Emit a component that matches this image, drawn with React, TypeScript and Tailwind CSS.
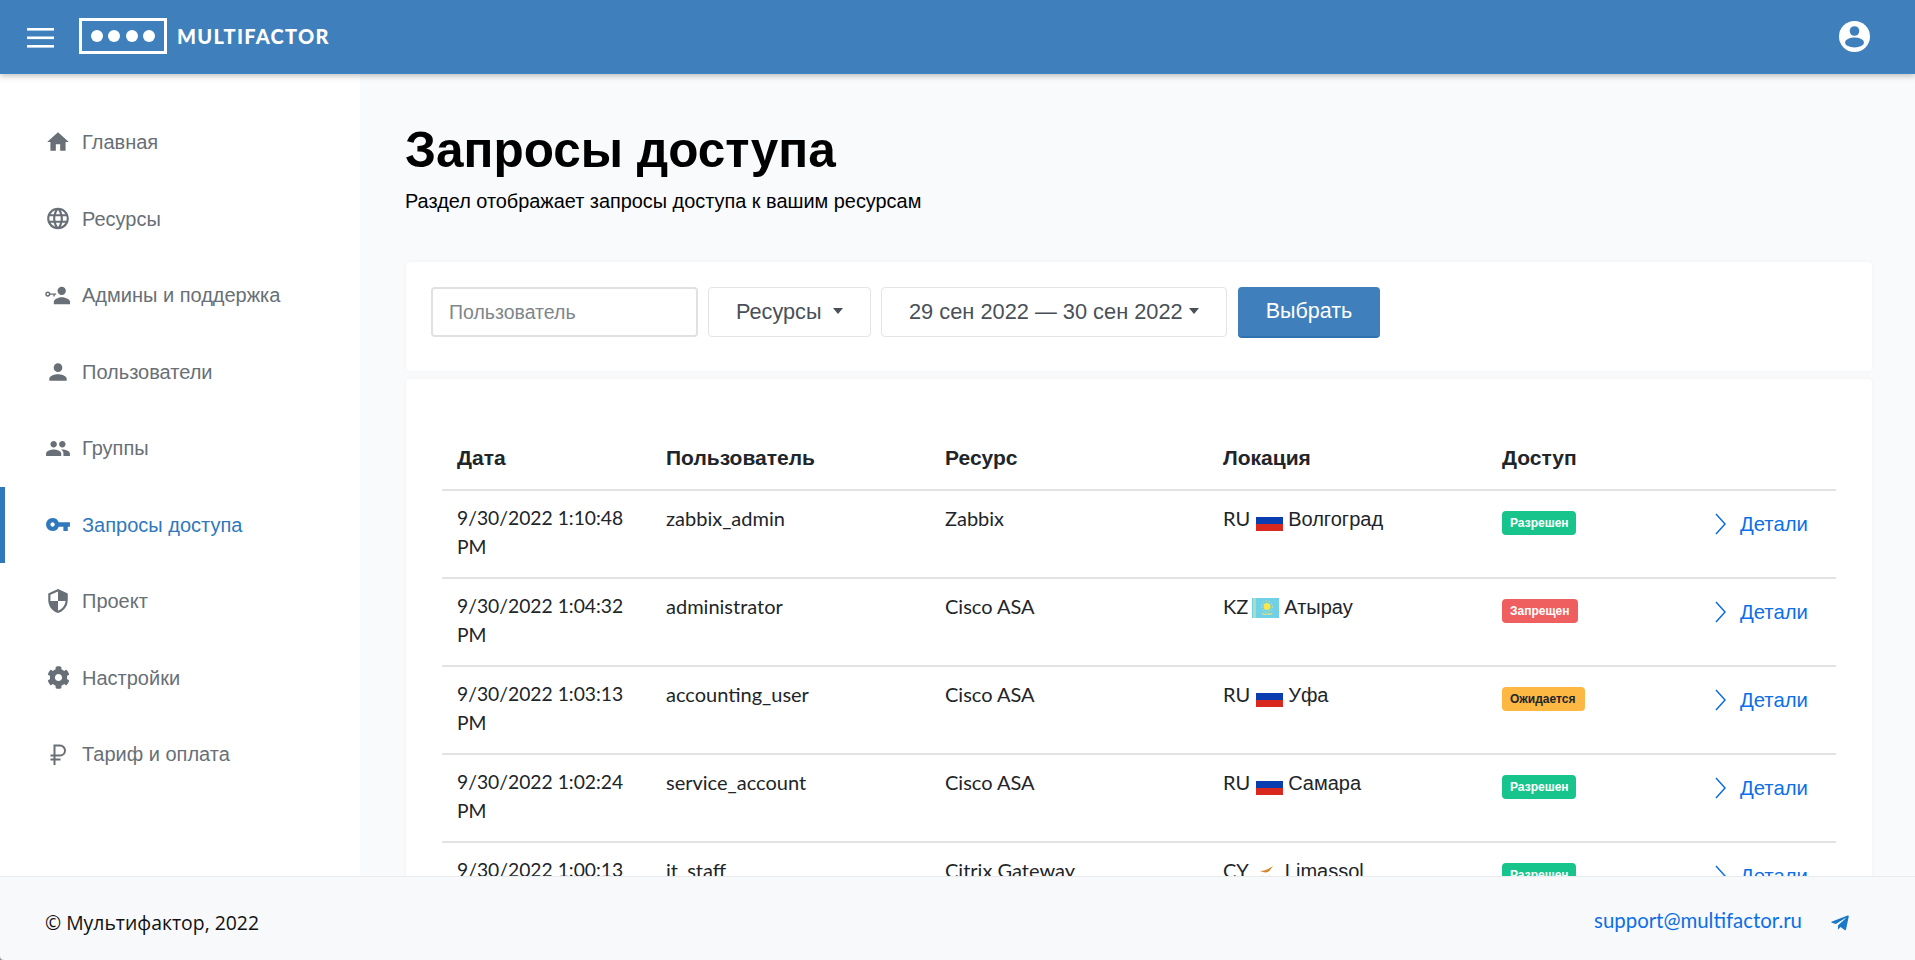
import { MdHome, MdLanguage, MdPerson, MdPeople, MdVpnKey, MdSecurity } from 'react-icons/md';
import { FaCog, FaTelegramPlane } from 'react-icons/fa';

const SANS = "font-['Liberation_Sans',sans-serif]";
const BODY = "font-['Lato','Liberation_Sans',sans-serif]";

function AdminIcon() {
  return (
    <svg width="28" height="19" viewBox="0 0 28 19" fill="currentColor">
      <circle cx="18" cy="4.5" r="4.5" />
      <path d="M9.5 19v-2.5c0-3.2 5.6-5 8.5-5s9 1.800 9 5V19z" />
      <circle cx="3" cy="8" r="2" fill="none" stroke="currentColor" strokeWidth="1.500" />
      <path d="M5 7.300h7v1.400h-1.500v2H9v-2H5z" />
    </svg>
  );
}

function RubleIcon() {
  return (
    <svg width="16" height="21" viewBox="0 0 16 21" fill="none" stroke="currentColor" strokeWidth="2">
      <path d="M4.500 21V1.500h5.500a5 5 0 0 1 0 10H0.500M0.500 15.500h10" />
    </svg>
  );
}

const menu = [
  { label: 'Главная', icon: <MdHome size={26} /> },
  { label: 'Ресурсы', icon: <MdLanguage size={27} /> },
  { label: 'Админы и поддержка', icon: <AdminIcon /> },
  { label: 'Пользователи', icon: <MdPerson size={28} /> },
  { label: 'Группы', icon: <MdPeople size={27} /> },
  { label: 'Запросы доступа', icon: <MdVpnKey size={27} />, active: true },
  { label: 'Проект', icon: <MdSecurity size={28} /> },
  { label: 'Настройки', icon: <FaCog size={23} /> },
  { label: 'Тариф и оплата', icon: <RubleIcon /> },
];

function FlagRU() {
  return (
    <svg width="27" height="21" viewBox="0 0 27 21" className="ml-[6px] mr-[5px] inline-block align-[-5px]">
      <rect width="27" height="7" fill="#ffffff" />
      <rect y="7" width="27" height="7" fill="#0a3db0" />
      <rect y="14" width="27" height="7" fill="#d9281e" />
    </svg>
  );
}

function FlagKZ() {
  return (
    <svg width="27" height="20" viewBox="0 0 27 20" className="ml-[4px] mr-[5px] inline-block align-[-4px]">
      <rect width="27" height="20" fill="#6fd0e6" />
      <rect x="1" width="3" height="20" fill="#a9dcc0" />
      <circle cx="15" cy="8.500" r="3.500" fill="#fbe64a" />
      <circle cx="15" cy="8.500" r="5.500" fill="none" stroke="#d9e28a" strokeWidth="1" strokeDasharray="1.500 1.500" />
      <path d="M8 14c3 2 11 2 14 0l-3 3h-8z" fill="#c4de9c" />
    </svg>
  );
}

function FlagCY() {
  return (
    <svg width="27" height="20" viewBox="0 0 27 20" className="ml-[4px] mr-[5px] inline-block align-[-4px]">
      <rect width="27" height="20" fill="#ffffff" />
      <path d="M7 9c3 0 6-1 8-2l5-3-3 4c-1 2-4 3-7 2z" fill="#d8822a" />
      <path d="M9 13c2 2 6 2 8 0-1 3-7 3-8 0z" fill="#b9c4b4" />
    </svg>
  );
}

const rows = [
  { date: '9/30/2022 1:10:48 PM', user: 'zabbix_admin', res: 'Zabbix', cc: 'RU', flag: <FlagRU />, city: 'Волгоград', status: 'ok' },
  { date: '9/30/2022 1:04:32 PM', user: 'administrator', res: 'Cisco ASA', cc: 'KZ', flag: <FlagKZ />, city: 'Атырау', status: 'no' },
  { date: '9/30/2022 1:03:13 PM', user: 'accounting_user', res: 'Cisco ASA', cc: 'RU', flag: <FlagRU />, city: 'Уфа', status: 'wait' },
  { date: '9/30/2022 1:02:24 PM', user: 'service_account', res: 'Cisco ASA', cc: 'RU', flag: <FlagRU />, city: 'Самара', status: 'ok' },
  { date: '9/30/2022 1:00:13 PM', user: 'it_staff', res: 'Citrix Gateway', cc: 'CY', flag: <FlagCY />, city: 'Limassol', status: 'ok' },
];

function Badge({ status }: { status: string }) {
  if (status === 'no') {
    return <span className="inline-block h-6 w-[76px] rounded bg-[#f05f5f] pl-2 text-[12px] font-bold leading-6 text-white">Запрещен</span>;
  }
  if (status === 'wait') {
    return <span className="inline-block h-6 w-[83px] rounded bg-[#fdb844] pl-2 text-[12px] font-bold leading-6 text-[#212529]">Ожидается</span>;
  }
  return <span className="inline-block h-6 w-[74px] rounded bg-[#17c48b] pl-2 text-[12px] font-bold leading-6 text-white">Разрешен</span>;
}

function Caret() {
  return <span className="mb-[3px] inline-block h-0 w-0 border-x-[5.500px] border-t-[6px] border-x-transparent border-t-[#495057]" />;
}

export default function App() {
  return (
    <div className={`flex h-[960px] flex-col overflow-hidden bg-[#8f8f8f] ${SANS}`}>
      <header className="relative z-10 flex h-[74px] shrink-0 items-center border-b border-[#3a86c8] bg-[#3f80bc] shadow-[0_2px_6px_rgba(0,0,0,0.25)]">
        <svg width="27" height="20" viewBox="0 0 27 20" fill="#ffffff" className="ml-[27px] mt-[3px]">
          <rect y="0" width="27" height="2.600" />
          <rect y="8.500" width="27" height="2.600" />
          <rect y="17" width="27" height="2.600" />
        </svg>
        <div className="mb-[2px] ml-[25px] flex h-[36px] w-[88px] items-center justify-center gap-[5.500px] border-[3px] border-white">
          <span className="h-3 w-3 rounded-full bg-white" />
          <span className="h-3 w-3 rounded-full bg-white" />
          <span className="h-3 w-3 rounded-full bg-white" />
          <span className="h-3 w-3 rounded-full bg-white" />
        </div>
        <span className={`mb-[2px] ml-[10px] text-[20px] font-black tracking-[1.300px] text-white ${BODY}`}>MULTIFACTOR</span>
        <svg width="31" height="31" viewBox="0 0 31 31" className="ml-auto mr-[45px]">
          <circle cx="15.500" cy="15.500" r="15.500" fill="#ffffff" />
          <circle cx="15.500" cy="10" r="4.800" fill="#3f80bc" />
          <ellipse cx="15.500" cy="21.500" rx="9.500" ry="5" fill="#3f80bc" />
        </svg>
      </header>

      <div className="flex min-h-0 flex-1">
        <nav className="w-[360px] shrink-0 bg-white pt-[30px]">
          {menu.map((item) => (
            <div
              key={item.label}
              className={`flex h-[76.500px] items-center border-l-[5px] text-[20px] ${
                item.active ? 'border-[#2f78bc] text-[#2f78bc]' : 'border-transparent text-[#686f76]'
              }`}
            >
              <span className="ml-[40px] mr-[11px] flex w-[26px] shrink-0 justify-center">{item.icon}</span>
              <span>{item.label}</span>
            </div>
          ))}
        </nav>

        <main className="min-w-0 flex-1 overflow-hidden bg-[#f9fafc] pl-[46px] pr-[43px] pt-[47px]">
          <h1 className="-ml-[1px] text-[49.500px] font-bold leading-[58px] text-black">Запросы доступа</h1>
          <p className="-ml-[1px] mt-[9px] text-[19.900px] leading-[27px] text-black">Раздел отображает запросы доступа к вашим ресурсам</p>

          <div className="mt-[47px] flex h-[109px] gap-[10px] rounded bg-white pl-[25px] pt-[25px] shadow-[0_0_4px_rgba(0,0,0,0.04)]">
            <div className="flex h-[50px] w-[267px] items-center rounded border-2 border-[#e0e1e3] pl-4 pt-[1px] text-[19.500px] text-[#80868b]">Пользователь</div>
            <div className="flex h-[50px] w-[163px] items-center gap-[11px] rounded border border-[#e2e4e6] pl-[27px] pt-[1px] text-[21.700px] text-[#495057]">
              Ресурсы <Caret />
            </div>
            <div className="flex h-[50px] w-[346px] items-center gap-[6px] rounded border border-[#e2e4e6] pl-[27px] pt-[1px] text-[21.800px] text-[#495057]">
              29 сен 2022 — 30 сен 2022 <Caret />
            </div>
            <button className="ml-[1px] h-[51px] w-[142px] rounded border-b-2 border-[#2f72b0] bg-[#3f80bc] text-[21.500px] font-medium text-white">Выбрать</button>
          </div>

          <div className="mt-2 rounded bg-white px-[36px] pt-[51px] shadow-[0_0_4px_rgba(0,0,0,0.04)]">
            <table className="w-[1394px] table-fixed border-collapse text-[20px] text-[#212529]">
              <colgroup>
                <col className="w-[209px]" />
                <col className="w-[279px]" />
                <col className="w-[278px]" />
                <col className="w-[279px]" />
                <col className="w-[200px]" />
                <col />
              </colgroup>
              <thead>
                <tr className="text-left text-[21px] font-bold">
                  <th className="h-[60px] px-[15px] pb-[3px]">Дата</th>
                  <th className="h-[60px] px-[15px] pb-[3px]">Пользователь</th>
                  <th className="h-[60px] px-[15px] pb-[3px]">Ресурс</th>
                  <th className="h-[60px] px-[15px] pb-[3px]">Локация</th>
                  <th className="h-[60px] px-[15px] pb-[3px]">Доступ</th>
                  <th />
                </tr>
              </thead>
              <tbody>
                {rows.map((row) => (
                  <tr key={row.date} className="border-t-2 border-[#e1e2e4] align-top leading-[28.500px]">
                    <td className={`px-[15px] pb-[16px] pt-[13px] text-[19.300px] ${BODY}`}>{row.date}</td>
                    <td className={`px-[15px] pb-[16px] pt-[13px] ${BODY}`}>{row.user}</td>
                    <td className={`px-[15px] pb-[16px] pt-[13px] ${BODY}`}>{row.res}</td>
                    <td className="px-[15px] pb-[16px] pt-[13px]">
                      <span className={BODY}>{row.cc}</span>{row.flag}{row.city}
                    </td>
                    <td className="px-[15px] pt-[15px]">
                      <Badge status={row.status} />
                    </td>
                    <td className="pt-[22px]">
                      <div className="ml-[28px] flex items-center gap-[14px] text-[#0b6fe8]">
                        <svg width="11" height="22" viewBox="0 0 11 22" fill="none" stroke="currentColor" strokeWidth="1.500">
                          <path d="M1 1l9 10-9 10" />
                        </svg>
                        <span className="text-[20.300px] leading-[22px]">Детали</span>
                      </div>
                    </td>
                  </tr>
                ))}
              </tbody>
            </table>
          </div>
        </main>
      </div>

      <footer className="relative z-10 flex h-[84px] shrink-0 items-center rounded-bl-[4px] border-t border-[#e9eaec] bg-[#f8f9fb] pl-[45px] pr-[65px] pt-[8px]">
        <span className="text-[19.400px] text-[#111111] font-['Open_Sans',sans-serif]">© Мультифактор, 2022</span>
        <span className={`ml-auto -translate-y-[2px] text-[20.400px] text-[#0b6fe8] ${BODY}`}>support@multifactor.ru</span>
        <FaTelegramPlane size={20} className="ml-[28px] text-[#1a78c8]" />
      </footer>
    </div>
  );
}
